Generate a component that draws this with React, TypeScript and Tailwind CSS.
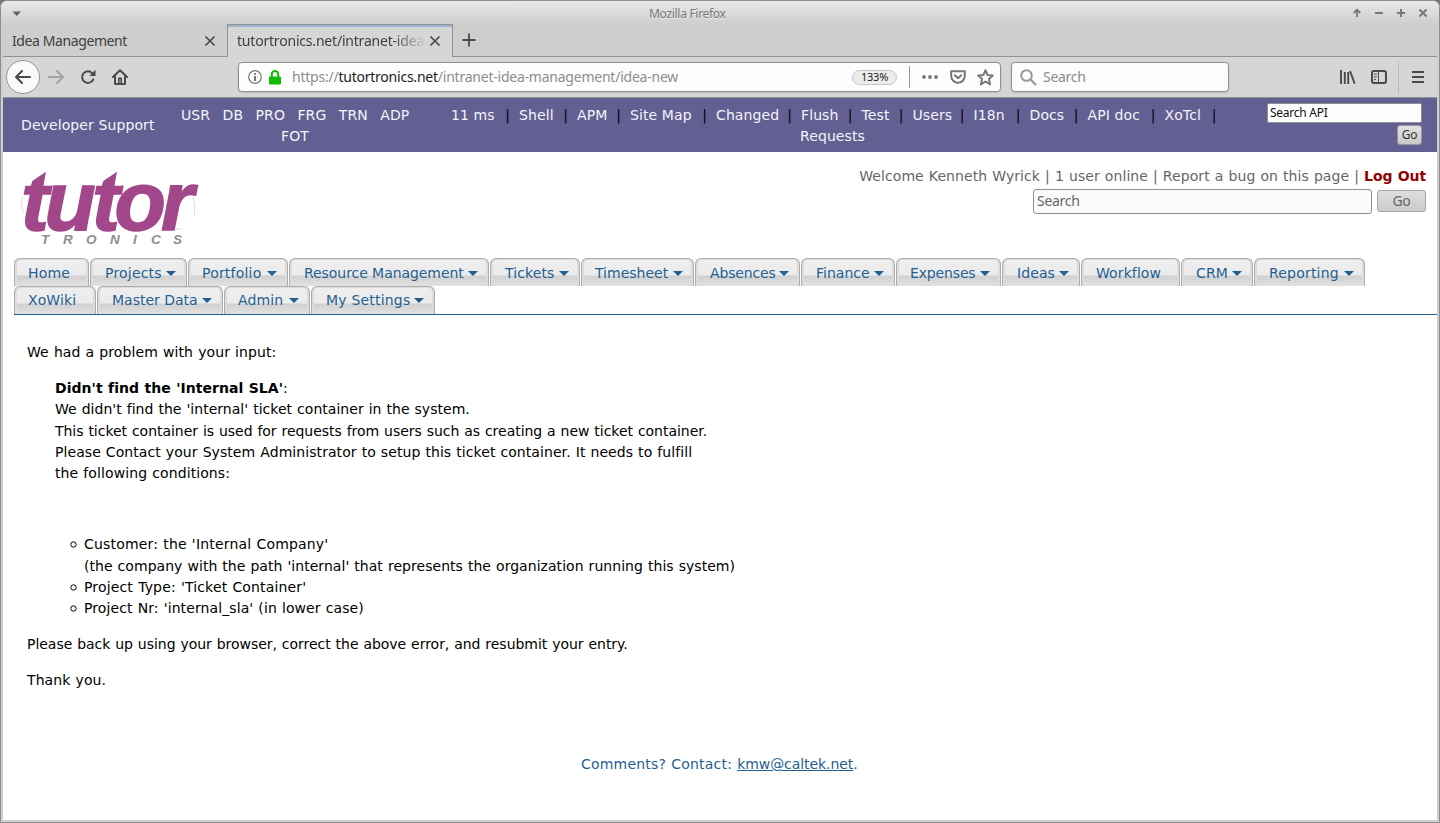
import React from "react";

const developerLinks = [
  { label: "11 ms", cls: "w-[68px]" },
  { label: "Shell", cls: "w-[58px]" },
  { label: "APM", cls: "w-[53px]" },
  { label: "Site Map", cls: "w-[86px]" },
  { label: "Changed", cls: "w-[85px]" },
  { label: "Flush", cls: "w-[60.5px]" },
  { label: "Test", cls: "w-[51px]" },
  { label: "Users", cls: "w-[61px]" },
  { label: "I18n", cls: "w-[56px]" },
  { label: "Docs", cls: "w-[58px]" },
  { label: "API doc", cls: "w-[77px]" },
  { label: "XoTcl", cls: "w-[61px]" },
];

type Tab = { label: string; cls: string; text: string; menu?: boolean };

const firstRow: Tab[] = [
  { label: "Home", cls: "w-[76px]", text: "ml-[11px] tracking-[0.2px]" },
  { label: "Projects", cls: "w-[98px]", text: "ml-[12px] tracking-[0.2px]", menu: true },
  { label: "Portfolio", cls: "w-[101px]", text: "ml-[11px] tracking-[0.2px]", menu: true },
  { label: "Resource Management", cls: "w-[201px]", text: "ml-[12px] tracking-[-0.06px]", menu: true },
  { label: "Tickets", cls: "w-[91px]", text: "ml-[12px] tracking-[0.1px]", menu: true },
  { label: "Timesheet", cls: "w-[114px]", text: "ml-[11px] tracking-[0px]", menu: true },
  { label: "Absences", cls: "w-[106px]", text: "ml-[12px] tracking-[-0.15px]", menu: true },
  { label: "Finance", cls: "w-[95px]", text: "ml-[12px] tracking-[0px]", menu: true },
  { label: "Expenses", cls: "w-[106px]", text: "ml-[11px] tracking-[-0.15px]", menu: true },
  { label: "Ideas", cls: "w-[79px]", text: "ml-[12px] tracking-[0.1px]", menu: true },
  { label: "Workflow", cls: "w-[100px]", text: "ml-[12px] tracking-[0.1px]" },
  { label: "CRM", cls: "w-[73px]", text: "ml-[12px] tracking-[0.1px]", menu: true },
  { label: "Reporting", cls: "w-[112px]", text: "ml-[12px] tracking-[0.2px]", menu: true },
];

const secondRow: Tab[] = [
  { label: "XoWiki", cls: "w-[83px]", text: "ml-[11px] tracking-[0.1px] -mt-px" },
  { label: "Master Data", cls: "w-[127px]", text: "ml-[12px] tracking-[0px] -mt-px", menu: true },
  { label: "Admin", cls: "w-[87px]", text: "ml-[11px] tracking-[0.1px] -mt-px", menu: true },
  { label: "My Settings", cls: "w-[125px]", text: "ml-[12px] tracking-[0.2px] -mt-px", menu: true },
];

function TabRow({ tabs, arrow }: { tabs: Tab[]; arrow: string }) {
  return (
    <div className="flex h-7">
      {tabs.map((t) => (
        <div key={t.label} className={`shrink-0 pr-px ${t.cls}`}>
          <div className="h-7 rounded-t-[6px] border border-b-0 border-[#adadad] bg-[#dcdcdc] px-[2px] pt-[1px]">
            <div className="flex h-[26px] justify-between rounded-t-[4px] bg-[linear-gradient(#eeeeee_0,#ebebeb_15px,#d0d0d0_16px,#e2e2e2_26px)] pr-[8px]">
              <span className={`text-[14px] leading-[26px] whitespace-nowrap text-[#1f5f92] ${t.text}`}>{t.label}</span>
              {t.menu && (
                <svg width="10" height="5" className={`shrink-0 ${arrow}`} viewBox="0 0 10 5">
                  <path d="M0 0H10L5 5Z" fill="#1f5f92" />
                </svg>
              )}
            </div>
          </div>
        </div>
      ))}
    </div>
  );
}

function Close() {
  return (
    <svg width="12" height="12" viewBox="0 0 12 12" className="shrink-0">
      <path d="M1.5 1.5L10.5 10.5M10.5 1.5L1.5 10.5" stroke="#4a4a4a" strokeWidth="1.7" fill="none" />
    </svg>
  );
}

function TitleBar() {
  return (
    <div className="flex h-[23px] items-start bg-[linear-gradient(#e8e8e8,#cecece)] pt-[1px]">
      <svg width="10" height="6" viewBox="0 0 10 6" className="mt-[9px] ml-[11px]">
        <path d="M0.5 0.5H9L4.8 5Z" fill="#606060" />
      </svg>
      <div className="flex-1 pl-[627px] font-[Noto_Sans] text-[12px] leading-[24px] tracking-[-0.3px] text-[#777] [text-shadow:0_1px_0_#eee]">
        Mozilla Firefox
      </div>
      <svg width="78" height="12" viewBox="0 0 78 12" className="mt-[5px] mr-[9px]" fill="none" stroke="#777" strokeWidth="2">
        <path d="M5 2.5V10M1.7 6L5 2.7L8.3 6" strokeWidth="1.8" />
        <path d="M23 6H31M45 6H53M49 2V10" />
        <path d="M67.5 2.5L74.5 9.5M74.5 2.5L67.5 9.5" />
      </svg>
    </div>
  );
}

function BrowserTabs() {
  return (
    <div className="flex h-[33px] bg-[#cecece] font-[Noto_Sans] text-[14px] text-[#3f3f3f]">
      <div className="flex w-[224px] items-center justify-between border-b border-[#929292] pt-px pr-[11px] pl-[9px]">
        <span className="-mt-px tracking-[-0.4px]">Idea Management</span>
        <Close />
      </div>
      <div className="flex w-[226px] items-center border-x border-t border-[#929292] bg-[#d6d6d6] pr-[11px] pl-[9px] shadow-[inset_0_2px_0_#99b5d1]">
        <span className="-mt-[2px] mr-[4px] w-[188px] overflow-hidden tracking-[-0.2px] whitespace-nowrap [mask-image:linear-gradient(90deg,#000_155px,transparent_190px)]">
          tutortronics.net/intranet-idea
        </span>
        <Close />
      </div>
      <div className="flex-1 border-b border-[#929292] pt-[9px] pl-[9px]">
        <svg width="14" height="14" viewBox="0 0 14 14">
          <path d="M7 0.5V13.5M0.5 7H13.5" stroke="#4a4a4a" strokeWidth="1.8" />
        </svg>
      </div>
    </div>
  );
}

function Toolbar() {
  return (
    <div className="flex h-[41px] items-center border-b border-[#929292] bg-[#d6d6d6] pl-[3px] font-[Noto_Sans] text-[14px]">
      <div className="flex size-[34px] items-center justify-center rounded-full border border-[#959595] bg-[#fafafa]">
        <svg width="16" height="14" viewBox="0 0 16 14" fill="none" stroke="#4a4a4a" strokeWidth="2" strokeLinecap="round" strokeLinejoin="round">
          <path d="M15 7H1.5M7 1L1 7L7 13" />
        </svg>
      </div>
      <svg width="16" height="14" viewBox="0 0 16 14" className="ml-[8px]" fill="none" stroke="#a2a2a2" strokeWidth="2" strokeLinecap="round" strokeLinejoin="round">
        <path d="M1 7H14.5M9 1L15 7L9 13" />
      </svg>
      <svg width="16" height="16" viewBox="0 0 16 16" className="ml-[16px]" fill="none" stroke="#4a4a4a" strokeWidth="2">
        <path d="M12.2 4.2A5.8 5.8 0 1 0 13.2 10.5" strokeLinecap="round" />
        <path d="M15.5 0.8V7H9.3Z" fill="#4a4a4a" stroke="none" />
      </svg>
      <svg width="16" height="16" viewBox="0 0 16 16" className="ml-[16px]" fill="none" stroke="#4a4a4a" strokeWidth="2" strokeLinecap="round" strokeLinejoin="round">
        <path d="M1 8L8 1.2L15 8M3 7.5V15H13V7.5" />
        <path d="M6.8 14.5V9.2H9.2V14.5Z" strokeWidth="1.6" />
      </svg>

      <div className="ml-[110px] flex h-[30px] w-[763px] items-center rounded-[4px] border border-[#8f8f8f] bg-[#fdfdfd] pr-[5px] pl-[9px] shadow-[0_1px_2px_#bbb]">
        <svg width="14" height="14" viewBox="0 0 14 14">
          <circle cx="7" cy="7" r="6.3" fill="none" stroke="#777" strokeWidth="1.2" />
          <path d="M6.1 3H7.9V4.7H6.1ZM6.1 6H7.9V11H6.1Z" fill="#666" />
        </svg>
        <svg width="12" height="15" viewBox="0 0 12 15" className="ml-[7px]">
          <path d="M2.8 8V4.2A3.2 3.2 0 0 1 9.2 4.2V8" fill="none" stroke="#12bc00" strokeWidth="2" />
          <rect y="6.5" width="12" height="8" rx="1" fill="#12bc00" />
        </svg>
        <span className="-mt-[2px] ml-[11px] flex-1 tracking-[-0.23px] whitespace-nowrap text-[#8d8d8d]">
          https://<span className="text-[#1c1c1c]">tutortronics.net</span>/intranet-idea-management/idea-new
        </span>
        <span className="flex h-[15px] w-[45px] items-center justify-center rounded-full border border-[#c6c6c6] bg-[#ececec] text-[11px] leading-none tracking-[-0.2px] text-[#222]">
          <span className="-mt-px">133%</span>
        </span>
        <span className="ml-[12px] h-[22px] w-px bg-[#999]" />
        <svg width="16" height="4" viewBox="0 0 16 4" className="ml-[12px]" fill="#777">
          <circle cx="2" cy="2" r="1.9" />
          <circle cx="8" cy="2" r="1.9" />
          <circle cx="14" cy="2" r="1.9" />
        </svg>
        <svg width="16" height="14" viewBox="0 0 16 14" className="ml-[12px]" fill="none" stroke="#777" strokeWidth="2" strokeLinecap="round" strokeLinejoin="round">
          <path d="M1.2 1.2H14.8V6A6.8 6.8 0 0 1 1.2 6Z" />
          <path d="M4.8 5.2L8 8.2L11.2 5.2" />
        </svg>
        <svg width="17" height="17" viewBox="0 0 17 17" className="mr-px ml-[11px]" fill="none" stroke="#777" strokeWidth="2" strokeLinejoin="round">
          <path d="M8.5 1.2L10.6 6L15.8 6.4L11.9 10L13.1 15.4L8.5 12.5L3.9 15.4L5.1 10L1.2 6.4L6.4 6Z" />
        </svg>
      </div>

      <div className="ml-[10px] flex h-[30px] w-[218px] items-center rounded-[4px] border border-[#8f8f8f] bg-[#fdfdfd] pl-[8px] shadow-[0_1px_2px_#bbb]">
        <svg width="17" height="17" viewBox="0 0 17 17" fill="none" stroke="#999" strokeWidth="2">
          <circle cx="6.5" cy="6.5" r="5.3" />
          <path d="M10.3 10.3L16 16" strokeWidth="2.3" />
        </svg>
        <span className="-mt-[2px] ml-[6px] tracking-[-0.3px] text-[#8b8b8b]">Search</span>
      </div>

      <svg width="16" height="14" viewBox="0 0 16 14" className="ml-[111px]" fill="none" stroke="#4a4a4a" strokeWidth="2">
        <path d="M1 0V14M4.8 2V14M8.2 2V14M10 1L14.7 13.6" strokeWidth="1.9" />
      </svg>
      <svg width="16" height="14" viewBox="0 0 16 14" className="ml-[15px]" fill="none" stroke="#4a4a4a" strokeWidth="2">
        <rect x="1" y="1" width="14" height="12" rx="2" />
        <path d="M7.5 1V13M3 4.2H6M3 6.8H6M3 9.4H5" strokeWidth="1" />
      </svg>
      <span className="ml-[11px] h-[33px] w-px bg-[#bcbcbc]" />
      <svg width="12" height="12" viewBox="0 0 12 12" className="ml-[13px]" stroke="#4a4a4a" strokeWidth="2">
        <path d="M0 1H12M0 6H12M0 11H12" />
      </svg>
    </div>
  );
}

function DeveloperBar() {
  return (
    <div className="flex h-[54px] bg-[#625f92] text-[14px] leading-[21px] tracking-[0.1px] whitespace-nowrap text-[#f4f4f8]">
      <div className="w-[178px] pt-[17px] pl-[18px]">Developer Support</div>
      <div className="w-[270px] pt-[7px]">
        <div className="flex gap-[12.4px]">
          <span>USR</span>
          <span>DB</span>
          <span>PRO</span>
          <span>FRG</span>
          <span>TRN</span>
          <span>ADP</span>
        </div>
        <div className="pl-[100px]">FOT</div>
      </div>
      <div className="w-[816px] pt-[7px]">
        <div className="flex">
          {developerLinks.map((l) => (
            <span key={l.label} className={`flex shrink-0 justify-between pr-[9px] ${l.cls}`}>
              <span>{l.label}</span>
              <span className="text-black">|</span>
            </span>
          ))}
        </div>
        <div className="pl-[349px]">Requests</div>
      </div>
      <div className="flex w-[155px] flex-col items-end pt-[5px] font-[Noto_Sans] text-[12px] tracking-[-0.25px]">
        <div className="h-[20px] w-[155px] rounded-[2px] border border-[#8f8f8f] bg-[#fdfdfd] pl-[2px] leading-[17px] text-[#111]">Search API</div>
        <div className="mt-[2px] flex h-[20px] w-[25px] items-center justify-center rounded-[3px] border border-[#999] bg-[linear-gradient(#e2e2e2,#c9c9c9)] text-[#333]">
          <span className="-mt-[2px]">Go</span>
        </div>
      </div>
    </div>
  );
}

function Logo() {
  return (
    <svg width="185" height="85" viewBox="0 0 185 85" fontFamily="Liberation Sans, sans-serif" fontWeight="700" fontStyle="italic">
      <path d="M3 48C-1 40 0 35 2 32" stroke="#ecd6e7" fill="none" />
      <path d="M172 32C174 40 174 46 173 52M145 64H161" stroke="#ddd" fill="none" />
      <text y="64.5" x="0 23.500 71 93.500 140" fontSize="84" fill="#a3478b" stroke="#a3478b" strokeWidth="1.5">
        tutor
      </text>
      <path d="M2 2H30V20.500H2ZM73 2H101V20.500H73Z" fill="#fff" />
      <path d="M9.500 22L11.300 16L25 6.700L22.200 22ZM80.500 22L82.300 16L96 6.700L93.200 22Z" fill="#a3478b" />
      <text y="79" x="20 42 65 89 112 130 152" fontSize="13.5" fill="#8b918c">
        TRONICS
      </text>
    </svg>
  );
}

function Header() {
  return (
    <div className="flex h-[106px] justify-between">
      <div className="pt-[13px] pl-[18px]">
        <Logo />
      </div>
      <div className="pt-[13px] pr-[11px] text-[#666]">
        <div className="flex justify-end text-[14px] leading-[22px] tracking-[0.08px] [word-spacing:0.5px] whitespace-pre">
          <span>Welcome Kenneth Wyrick | 1 user online | Report a bug on this page | </span>
          <span className="font-bold tracking-[-0.08px] text-[#930000]">Log Out</span>
        </div>
        <div className="mt-[2px] flex justify-end gap-[5px] font-[Noto_Sans] text-[14px] tracking-[-0.3px]">
          <div className="h-[25px] w-[339px] rounded-[3px] border border-[#8f8f8f] bg-[#fbfbfb] pl-[3px] leading-[22px]">Search</div>
          <div className="mt-px flex h-[22px] w-[49px] items-center justify-center rounded-[3px] border border-[#a5a5a5] bg-[linear-gradient(#dedede,#cbcbcb)]">
            <span className="-mt-[2px]">Go</span>
          </div>
        </div>
      </div>
    </div>
  );
}

function Bullet() {
  return (
    <svg width="7" height="7" viewBox="0 0 7 7" className="mt-[7px] mr-[7px]">
      <circle cx="3.5" cy="3.5" r="2.7" fill="none" stroke="#000" />
    </svg>
  );
}

function Content() {
  return (
    <div className="pt-[27px] pl-[24px] text-[14px] leading-[21.33px] tracking-[0.1px] [word-spacing:0.5px] whitespace-nowrap text-black">
      <p>We had a problem with your input:</p>
      <div className="mt-[14.6px] pl-[28px]">
        <p>
          <b className="tracking-[0.04px]">Didn't find the 'Internal SLA'</b>:
        </p>
        <p className="tracking-[0.03px]">We didn't find the 'internal' ticket container in the system.</p>
        <p className="tracking-[-0.03px]">This ticket container is used for requests from users such as creating a new ticket container.</p>
        <p className="tracking-[0.07px]">Please Contact your System Administrator to setup this ticket container. It needs to fulfill</p>
        <p>the following conditions:</p>
      </div>
      <ul className="mt-[49.9px] pl-[43px]">
        <li className="flex">
          <Bullet />
          <div>
            <p className="tracking-[0.18px]">Customer: the 'Internal Company'</p>
            <p className="tracking-[0.045px]">(the company with the path 'internal' that represents the organization running this system)</p>
          </div>
        </li>
        <li className="flex">
          <Bullet />
          <span className="tracking-[0.16px]">Project Type: 'Ticket Container'</span>
        </li>
        <li className="flex">
          <Bullet />
          <span>Project Nr: 'internal_sla' (in lower case)</span>
        </li>
      </ul>
      <p className="mt-[14.5px] tracking-[-0.03px]">Please back up using your browser, correct the above error, and resubmit your entry.</p>
      <p className="mt-[14.5px]">Thank you.</p>
      <p className="mt-[63px] pl-[554px] tracking-[0.2px] text-[#1f5f92]">
        Comments? Contact: <a className="tracking-[-0.07px] underline">kmw@caltek.net</a>.
      </p>
    </div>
  );
}

export default function App() {
  return (
    <div className="h-[823px] w-[1440px] overflow-hidden bg-[#777]">
      <div className="h-[823px] overflow-hidden rounded-t-[7px] border border-[#8f8f8f] bg-[#cecece] font-[DejaVu_Sans]">
        <TitleBar />
        <div className="mx-[2px] flex h-[796px] flex-col overflow-hidden bg-white">
          <BrowserTabs />
          <Toolbar />
          <DeveloperBar />
          <Header />
          <div className="ml-[11px] border-b border-[#1f5f92]">
            <TabRow tabs={firstRow} arrow="mt-[11px]" />
            <TabRow tabs={secondRow} arrow="mt-[10px]" />
          </div>
          <Content />
        </div>
      </div>
    </div>
  );
}
